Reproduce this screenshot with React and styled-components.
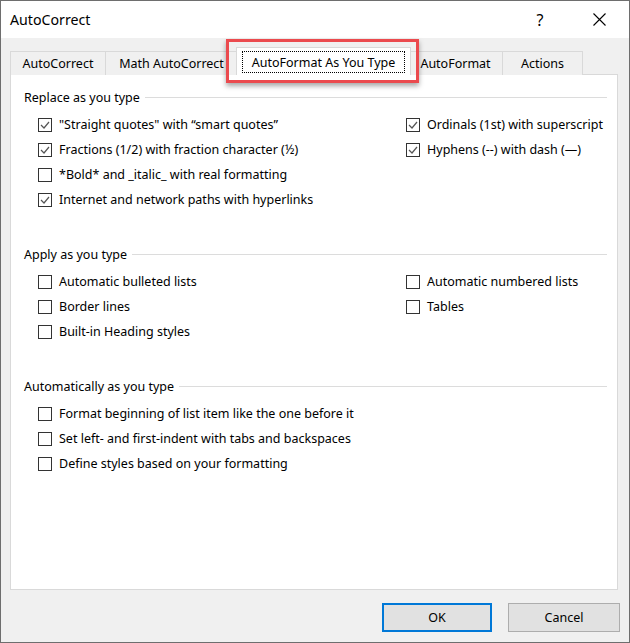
import React from "react";
import styled, { createGlobalStyle } from "styled-components";

const Global = createGlobalStyle`
  html, body { margin: 0; padding: 0; background: #ffffff; }
  body { font-family: "Noto Sans", "Open Sans", sans-serif; color: #000; }
  * { box-sizing: border-box; }
`;

const Window = styled.div`
  width: 630px;
  height: 643px;
  border: 1px solid #6e6e6e;
  background: #f0f0f0;
  display: flex;
  flex-direction: column;
`;

const TitleBar = styled.div`
  height: 37px;
  background: #ffffff;
  display: flex;
  align-items: center;
  padding-left: 9px;
`;

const Title = styled.div`
  font-size: 14.2px;
  flex: 1;
  padding-bottom: 1px;
`;

const TitleButton = styled.div`
  width: ${(p) => p.w}px;
  height: 37px;
  display: flex;
  align-items: center;
  justify-content: center;
  font-size: 16px;
`;

const Body = styled.div`
  flex: 1;
  display: flex;
  flex-direction: column;
  padding: 9px 0 0 9px;
`;

const TabStrip = styled.div`
  display: flex;
  align-items: flex-end;
  height: 28px;
  position: relative;
  z-index: 1;
`;

const Tab = styled.div`
  width: ${(p) => p.w}px;
  height: ${(p) => (p.active ? 28 : 24)}px;
  margin-left: ${(p) => (p.active ? -2 : p.first ? 0 : -1)}px;
  margin-right: ${(p) => (p.active ? -2 : 0)}px;
  background: ${(p) => (p.active ? "#ffffff" : "#f0f0f0")};
  border: 1px solid #d9d9d9;
  border-bottom: none;
  display: flex;
  align-items: ${(p) => (p.active ? "flex-start" : "center")};
  justify-content: center;
  font-size: 12.5px;
  position: relative;
  z-index: ${(p) => (p.active ? 2 : 1)};
  padding-top: ${(p) => (p.active ? 3 : 0)}px;
  white-space: nowrap;
`;

const FocusLabel = styled.span`
  border: 1px dotted #000;
  height: 22px;
  padding: 0 9px;
  display: flex;
  align-items: center;
`;

const Highlight = styled.div`
  position: absolute;
  left: 216px;
  top: -8px;
  width: 193px;
  height: 44px;
  border: 3px solid #eb4a4e;
  box-shadow: 0 3px 5px rgba(0, 0, 0, 0.35);
  z-index: 3;
  pointer-events: none;
`;

const Panel = styled.div`
  width: 608px;
  height: 516px;
  margin-top: -1px;
  background: #ffffff;
  border: 1px solid #d9d9d9;
  padding: 14px 10px 0 13px;
  display: flex;
  flex-direction: column;
  gap: 34px;
`;

const Section = styled.div`
  display: flex;
  flex-direction: column;
`;

const Heading = styled.div`
  display: flex;
  align-items: center;
  height: 16px;
  font-size: 12.5px;
  &::after {
    content: "";
    flex: 1;
    height: 1px;
    background: #dcdcdc;
    margin-left: 5px;
  }
`;

const Options = styled.div`
  display: grid;
  grid-template-columns: 368px 1fr;
  grid-auto-rows: 25px;
  margin-top: 7px;
  padding-left: 14px;
`;

const Option = styled.label`
  display: flex;
  align-items: center;
  gap: 7px;
  font-size: 12.5px;
  grid-column: ${(p) => p.col};
  grid-row: ${(p) => p.row};
  white-space: nowrap;
`;

const Box = styled.span`
  width: 14px;
  height: 14px;
  border: 1px solid #333333;
  background: #ffffff;
  display: flex;
  align-items: center;
  justify-content: center;
  flex-shrink: 0;
`;

const Footer = styled.div`
  display: flex;
  justify-content: flex-end;
  gap: 16px;
  padding: 13px 9px 0 0;
`;

const Button = styled.button`
  width: ${(p) => p.w}px;
  height: 29px;
  background: #e1e1e1;
  border: ${(p) => (p.primary ? "2px solid #0078d7" : "1px solid #adadad")};
  font-family: inherit;
  font-size: 12.5px;
  color: #000;
  padding: 0;
`;

const Check = ({ checked }) => (
  <Box>
    {checked && (
      <svg width="12" height="12" viewBox="0 0 12 12">
        <polyline points="2,6 5,9 10,3" fill="none" stroke="#555" strokeWidth="1.2" />
      </svg>
    )}
  </Box>
);

const sections = [
  {
    title: "Replace as you type",
    items: [
      { t: "\"Straight quotes\" with \u201csmart quotes\u201d", c: true, col: 1, row: 1 },
      { t: "Fractions (1/2) with fraction character (\u00bd)", c: true, col: 1, row: 2 },
      { t: "*Bold* and _italic_ with real formatting", c: false, col: 1, row: 3 },
      { t: "Internet and network paths with hyperlinks", c: true, col: 1, row: 4 },
      { t: "Ordinals (1st) with superscript", c: true, col: 2, row: 1 },
      { t: "Hyphens (--) with dash (\u2014)", c: true, col: 2, row: 2 },
    ],
  },
  {
    title: "Apply as you type",
    items: [
      { t: "Automatic bulleted lists", c: false, col: 1, row: 1 },
      { t: "Border lines", c: false, col: 1, row: 2 },
      { t: "Built-in Heading styles", c: false, col: 1, row: 3 },
      { t: "Automatic numbered lists", c: false, col: 2, row: 1 },
      { t: "Tables", c: false, col: 2, row: 2 },
    ],
  },
  {
    title: "Automatically as you type",
    items: [
      { t: "Format beginning of list item like the one before it", c: false, col: 1, row: 1 },
      { t: "Set left- and first-indent with tabs and backspaces", c: false, col: 1, row: 2 },
      { t: "Define styles based on your formatting", c: false, col: 1, row: 3 },
    ],
  },
];

const tabs = [
  { t: "AutoCorrect", w: 96 },
  { t: "Math AutoCorrect", w: 133 },
  { t: "AutoFormat As You Type", w: 175, active: true },
  { t: "AutoFormat", w: 95 },
  { t: "Actions", w: 81 },
];

export default function App() {
  return (
    <>
      <Global />
      <Window>
        <TitleBar>
          <Title>AutoCorrect</Title>
          <TitleButton w={58}>?</TitleButton>
          <TitleButton w={60}>
            <svg width="13" height="13" viewBox="0 0 13 13">
              <path d="M0.5 0.5 L12.5 12.5 M12.5 0.5 L0.5 12.5" stroke="#000" strokeWidth="1.1" />
            </svg>
          </TitleButton>
        </TitleBar>
        <Body>
          <TabStrip>
            {tabs.map((tab, i) =>
              tab.active ? (
                <Tab key={tab.t} w={tab.w} active>
                  <FocusLabel>{tab.t}</FocusLabel>
                </Tab>
              ) : (
                <Tab key={tab.t} w={tab.w} first={i === 0}>
                  {tab.t}
                </Tab>
              )
            )}
            <Highlight />
          </TabStrip>
          <Panel>
            {sections.map((s) => (
              <Section key={s.title}>
                <Heading>{s.title}</Heading>
                <Options>
                  {s.items.map((it) => (
                    <Option key={it.t} col={it.col} row={it.row}>
                      <Check checked={it.c} />
                      {it.t}
                    </Option>
                  ))}
                </Options>
              </Section>
            ))}
          </Panel>
          <Footer>
            <Button primary w={110}>OK</Button>
            <Button w={112}>Cancel</Button>
          </Footer>
        </Body>
      </Window>
    </>
  );
}
